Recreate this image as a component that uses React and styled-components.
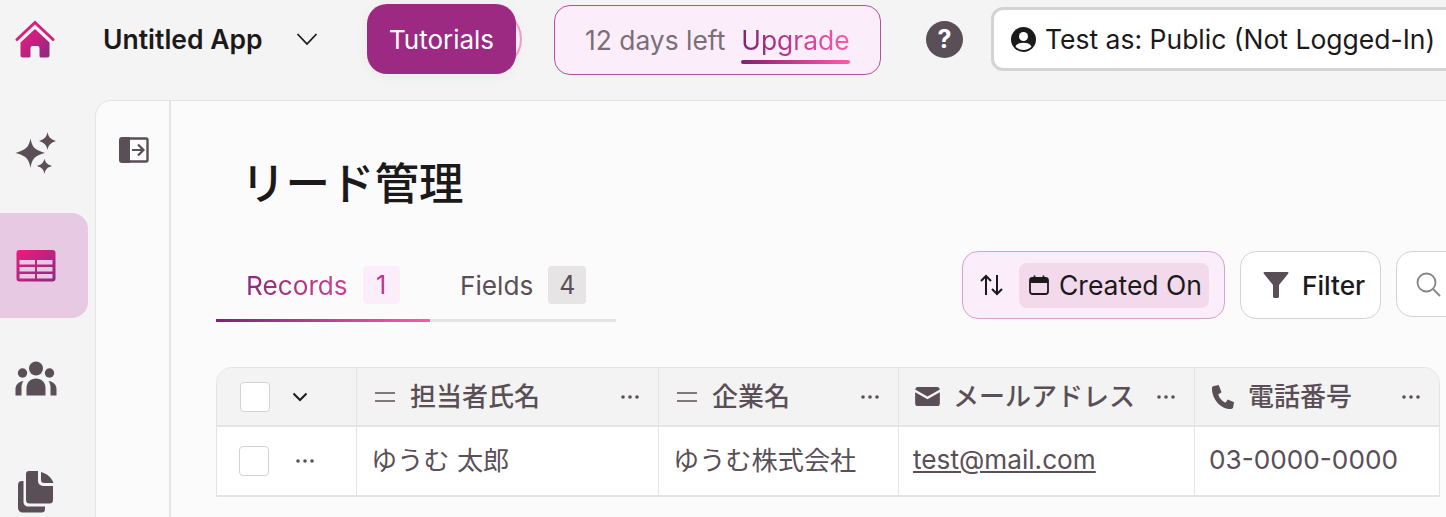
import React from "react";
import styled, { createGlobalStyle } from "styled-components";

const GlobalStyle = createGlobalStyle`
  html, body {
    margin: 0;
    padding: 0;
    height: 100%;
    overflow: hidden;
    background: #f4f4f4;
  }
  * {
    box-sizing: border-box;
  }
  body {
    font-family: Inter, "Noto Sans CJK JP", sans-serif;
    color: #1c191b;
  }
`;

const Page = styled.div`
  width: 1446px;
  height: 517px;
  overflow: hidden;
  display: flex;
  flex-direction: column;
`;

const TopBar = styled.header`
  height: 100px;
  flex-shrink: 0;
  display: flex;
  align-items: center;
  padding-left: 15px;
  padding-bottom: 22px;
  white-space: nowrap;
`;

const AppName = styled.span`
  font-size: 26.5px;
  font-weight: 600;
  margin-left: 48px;
  width: 193px;
  flex-shrink: 0;
`;

const Chevron = styled.svg`
  width: 22px;
  height: 14px;
  margin-right: 49px;
  flex-shrink: 0;
`;

const TutorialWrap = styled.div`
  position: relative;
  width: 149px;
  height: 70px;
  margin-right: 38px;
  flex-shrink: 0;
`;

const PulseRing = styled.span`
  position: absolute;
  right: -6px;
  top: 5px;
  width: 60px;
  height: 60px;
  border-radius: 50%;
  border: 2px solid #f89cc9;
`;

const TutorialButton = styled.button`
  position: relative;
  width: 100%;
  height: 100%;
  border: 0;
  border-radius: 20px;
  background: #9c2a83;
  color: #fff;
  font: 400 26px Inter, sans-serif;
  box-shadow: 0 2px 14px rgba(0, 0, 0, 0.05);
`;

const TrialBox = styled.div`
  width: 327px;
  height: 70px;
  flex-shrink: 0;
  display: flex;
  align-items: center;
  padding-left: 30px;
  gap: 16px;
  border: 1px solid #b4519f;
  border-radius: 16px;
  background: #fbeefa;
  font-size: 26.4px;
  color: #7b6e77;
  margin-right: 45px;
  margin-top: 2px;
`;

const Upgrade = styled.span`
  position: relative;
  background: linear-gradient(90deg, #7f2272, #ff5aab);
  -webkit-background-clip: text;
  background-clip: text;
  color: transparent;
`;

const UpgradeBar = styled.span`
  position: absolute;
  left: 0;
  right: 0;
  bottom: -8px;
  height: 4px;
  border-radius: 2px;
  background: linear-gradient(90deg, #7f2272, #ff5aab);
`;

const HelpIcon = styled.span`
  width: 37px;
  height: 37px;
  flex-shrink: 0;
  border-radius: 50%;
  background: #5a4f57;
  color: #fff;
  font-size: 25px;
  font-weight: 700;
  display: flex;
  align-items: center;
  justify-content: center;
  margin-right: 28px;
`;

const TestAs = styled.div`
  width: 480px;
  height: 64px;
  flex-shrink: 0;
  display: flex;
  align-items: center;
  gap: 9px;
  padding-left: 17px;
  border: 3px solid #d5d2d4;
  border-radius: 12px;
  background: #fff;
  font-size: 26.5px;
  font-weight: 400;
`;

const Body = styled.div`
  flex: 1;
  display: flex;
  min-height: 0;
`;

const Sidebar = styled.nav`
  width: 95px;
  flex-shrink: 0;
  display: flex;
  flex-direction: column;
  gap: 8px;
`;

const SideItem = styled.div`
  width: 88px;
  height: 105px;
  flex-shrink: 0;
  display: flex;
  align-items: center;
  justify-content: center;
  padding-right: 17px;
  border-radius: 0 16px 16px 0;
  background: ${({ $active }) => ($active ? "#e8c9e3" : "transparent")};
`;

const Panel = styled.main`
  flex: 1;
  min-width: 0;
  display: flex;
  background: #fbfbfb;
  border-top: 1px solid #e5e3e4;
  border-left: 1px solid #e5e3e4;
  border-top-left-radius: 16px;
`;

const Rail = styled.div`
  width: 75px;
  flex-shrink: 0;
  display: flex;
  justify-content: center;
  padding-top: 36px;
  padding-left: 3px;
  border-right: 2px solid #e5e3e4;
`;

const Content = styled.section`
  flex: 1;
  min-width: 0;
  padding-left: 45px;
`;

const Title = styled.h1`
  margin: 49px 0 0 25px;
  height: 68px;
  font-size: 44.5px;
  line-height: 68px;
  font-weight: 500;
  color: #1c191b;
`;

const ControlRow = styled.div`
  display: flex;
  align-items: flex-start;
  margin-top: 33px;
  height: 116px;
`;

const Tabs = styled.div`
  width: 400px;
  height: 71px;
  flex-shrink: 0;
  display: flex;
  border-bottom: 3px solid #e5e3e4;
  margin-right: 346px;
  position: relative;
`;

const Tab = styled.div`
  width: ${({ $w }) => $w}px;
  height: 71px;
  flex-shrink: 0;
  display: flex;
  align-items: center;
  gap: 15px;
  padding-left: 30px;
  font-size: 26.2px;
  color: #5a4f57;
  border-bottom: 3px solid transparent;
  ${({ $active }) =>
    $active && "border-image: linear-gradient(90deg, #7f2272, #ff5aab) 1;"}
`;

const TabLabel = styled.span`
  ${({ $active }) =>
    $active &&
    `background: linear-gradient(90deg, #8d2a7c, #d0408f);
     -webkit-background-clip: text;
     background-clip: text;
     color: transparent;`}
`;

const TabBadge = styled.span`
  width: ${({ $active }) => ($active ? 37 : 38)}px;
  height: 38px;
  border-radius: 4px;
  display: flex;
  align-items: center;
  justify-content: center;
  font-size: 25px;
  background: ${({ $active }) => ($active ? "#fbeefa" : "#e6e4e5")};
  color: ${({ $active }) => ($active ? "#b8378c" : "#5a4f57")};
`;

const SortBox = styled.div`
  width: 263px;
  height: 68px;
  flex-shrink: 0;
  display: flex;
  align-items: center;
  padding-left: 17px;
  gap: 16px;
  border: 1px solid #d8a2d0;
  border-radius: 16px;
  background: #fbeefa;
  margin-right: 15px;
`;

const SortChip = styled.div`
  width: 190px;
  height: 45px;
  display: flex;
  align-items: center;
  gap: 10px;
  padding-left: 10px;
  border-radius: 8px;
  background: #f2daec;
  font-size: 26.5px;
  white-space: nowrap;
`;

const FilterButton = styled.div`
  width: 141px;
  height: 68px;
  flex-shrink: 0;
  display: flex;
  align-items: center;
  gap: 13px;
  padding-left: 22px;
  border: 1px solid #d5d2d4;
  border-radius: 16px;
  background: #fff;
  font-size: 26.2px;
  font-weight: 500;
  margin-right: 15px;
`;

const SearchBox = styled.div`
  width: 200px;
  height: 66px;
  flex-shrink: 0;
  display: flex;
  align-items: center;
  padding-left: 19px;
  border: 1px solid #d5d2d4;
  border-radius: 16px;
  background: #fff;
`;

const Table = styled.div`
  width: 1224px;
  border: 1px solid #e5e3e4;
  border-radius: 16px 16px 0 0;
  overflow: hidden;
`;

const Row = styled.div`
  display: grid;
  grid-template-columns: 140px 302px 240px 296px 1fr;
  height: ${({ $head }) => ($head ? 59 : 69)}px;
  background: ${({ $head }) => ($head ? "#f3f3f3" : "#fff")};
  border-bottom: ${({ $head }) => ($head ? "2px" : "1px")} solid #e5e3e4;
`;

const HeadCell = styled.div`
  display: flex;
  align-items: center;
  padding: 0 18px 0 16px;
  gap: 13px;
  border-right: 1px solid #e5e3e4;
  font-size: 26px;
  font-weight: 500;
  color: #5a4f57;
  white-space: nowrap;
  &:last-child {
    border-right: 0;
  }
`;

const HeadLabel = styled.span`
  flex: 1;
  min-width: 0;
  margin-bottom: 4px;
`;

const SelectCell = styled.div`
  display: flex;
  align-items: center;
  padding-left: ${({ $body }) => ($body ? 22 : 23)}px;
  gap: ${({ $body }) => ($body ? 26 : 22)}px;
  border-right: 1px solid #e5e3e4;
`;

const Check = styled.span`
  width: 30px;
  height: 30px;
  flex-shrink: 0;
  border: 1px solid #d5d2d4;
  border-radius: 4px;
  background: #fff;
`;

const BodyCell = styled.div`
  display: flex;
  align-items: center;
  padding: 0 14px;
  padding-bottom: 4px;
  border-right: 1px solid #e5e3e4;
  font-size: 26.2px;
  color: #5a4f57;
  white-space: nowrap;
  &:last-child {
    border-right: 0;
  }
`;

const Mail = styled.a`
  color: #5a4f57;
  text-decoration: underline;
`;

const Dots = ({ color = "#5a4f57" }) => (
  <svg width="20" height="6" viewBox="0 0 20 6" style={{ flexShrink: 0 }}>
    <circle cx="3" cy="3" r="1.8" fill={color} />
    <circle cx="10" cy="3" r="1.8" fill={color} />
    <circle cx="17" cy="3" r="1.8" fill={color} />
  </svg>
);

const EqualIcon = () => (
  <svg width="24" height="14" viewBox="0 0 24 14" style={{ flexShrink: 0 }}>
    <path d="M2 3h20M2 11h20" stroke="#5a4f57" strokeWidth="1.6" />
  </svg>
);

const Gradient = ({ id }) => (
  <defs>
    <linearGradient id={id} x1="0" y1="0" x2="1" y2="1">
      <stop offset="0" stopColor="#f01a7f" />
      <stop offset="1" stopColor="#8a2a82" />
    </linearGradient>
  </defs>
);

const HomeIcon = () => (
  <svg width="40" height="38" viewBox="0 0 40 38" style={{ flexShrink: 0 }}>
    <Gradient id="homeGrad" />
    <path d="M2 19.500 20 2.500l18 17" fill="none" stroke="#d8207f" strokeWidth="3" strokeLinecap="round" />
    <path
      d="M20 9 5.500 22.500V35a2.500 2.500 0 0 0 2.500 2.500H14a1.500 1.500 0 0 0 1.500-1.500V28a2 2 0 0 1 2-2h5a2 2 0 0 1 2 2v8a1.500 1.500 0 0 0 1.500 1.500h6a2.500 2.500 0 0 0 2.500-2.500V22.500Z"
      fill="url(#homeGrad)"
    />
  </svg>
);

const SparkIcon = () => (
  <svg width="42" height="42" viewBox="0 0 42 42">
    <path d="M15.500 6.500c1.500 8.200 4 11.500 14.500 14.500-10.500 2.500-13 6-14.500 15C14 27 11 23.500.5 21 11 18 14 14.700 15.500 6.500Z" fill="#5a4f57" />
    <path d="M32.500 0c1 5 2.800 7 8.500 9-5.700 2-7.500 4-8.500 9-1-5-2.800-7-8.500-9 5.700-2 7.500-4 8.500-9Z" fill="#5a4f57" />
    <path d="M29.500 26.500c.9 4 2.400 5.800 7.500 7.500-5.100 1.700-6.600 3.500-7.500 8-.9-4.500-2.400-6.300-7.500-8 5.100-1.700 6.600-3.500 7.500-7.500Z" fill="#5a4f57" />
  </svg>
);

const TableIcon = () => (
  <svg width="40" height="32" viewBox="0 0 40 32">
    <Gradient id="tableGrad" />
    <rect x="0.500" y="0" width="39" height="31.500" rx="3" fill="url(#tableGrad)" />
    {[10, 17, 24].map((y) => (
      <g key={y} fill="#e8c9e3">
        <rect x="3.500" y={y} width="15.500" height="4.500" />
        <rect x="21" y={y} width="15.500" height="4.500" />
      </g>
    ))}
  </svg>
);

const GroupIcon = () => (
  <svg width="42" height="36" viewBox="0 0 42 36" fill="#5a4f57">
    <circle cx="21" cy="7.500" r="7" />
    <circle cx="7.500" cy="12" r="4.700" />
    <circle cx="34.500" cy="12" r="4.700" />
    <path d="M11.500 34.500V27c0-5.500 4-9.500 9.500-9.500s9.500 4 9.500 9.500v7.500Z" />
    <path d="M0.500 34.500V28c0-4 3-7.500 8-8-1.500 2-2 4-2 7v7.500Z" />
    <path d="M41.500 34.500V28c0-4-3-7.500-8-8 1.500 2 2 4 2 7v7.500Z" />
  </svg>
);

const FilesIcon = () => (
  <svg width="36" height="42" viewBox="0 0 36 42" fill="#5a4f57">
    <path d="M11 0h9v10a5 5 0 0 0 5 5h10v14a3.500 3.500 0 0 1-3.500 3.500H11.500A3.500 3.500 0 0 1 8 29V3a3 3 0 0 1 3-3Z" />
    <path d="M23 1c6 1.500 11 6 12.500 11H26a3 3 0 0 1-3-3Z" />
    <path d="M5.500 10v21a4.500 4.500 0 0 0 4.500 4.500h17V38a3.500 3.500 0 0 1-3.500 3.500H4.500A4.500 4.500 0 0 1 0 37V14a4 4 0 0 1 4-4Z" />
  </svg>
);

const CollapseIcon = () => (
  <svg width="30" height="26" viewBox="0 0 30 26">
    <path d="M3 0h8v26H3a3 3 0 0 1-3-3V3a3 3 0 0 1 3-3Z" fill="#5a4f57" />
    <path d="M11 1.500h16A1.500 1.500 0 0 1 28.500 3v20a1.500 1.500 0 0 1-1.500 1.500H11" fill="none" stroke="#5a4f57" strokeWidth="2.400" />
    <path d="M13 13h11M19 7.500l5.500 5.500-5.500 5.500" fill="none" stroke="#5a4f57" strokeWidth="2.200" />
  </svg>
);

const UserCircle = () => (
  <svg width="25" height="25" viewBox="0 0 25 25" style={{ flexShrink: 0 }}>
    <circle cx="12.500" cy="12.500" r="12.500" fill="#1c191b" />
    <circle cx="12.500" cy="9.500" r="4.500" fill="#fff" />
    <path d="M4.500 19.500c1.500-3 4.500-3.800 8-3.800s6.500.8 8 3.800c-2 2.300-4.800 3.500-8 3.500s-6-1.200-8-3.500Z" fill="#fff" />
  </svg>
);

const SortIcon = () => (
  <svg width="23" height="22" viewBox="0 0 23 22" style={{ flexShrink: 0 }}>
    <path d="M6 21V2M1 7l5-5 5 5M17 1v19M12 15l5 5 5-5" fill="none" stroke="#1c191b" strokeWidth="2" />
  </svg>
);

const CalendarIcon = () => (
  <svg width="20" height="20" viewBox="0 0 20 20" style={{ flexShrink: 0 }}>
    <rect x="1" y="3" width="18" height="16" rx="2.500" fill="none" stroke="#1c191b" strokeWidth="1.800" />
    <path d="M1 4h18v4H1Z" fill="#1c191b" />
    <path d="M5.500 0.500v3M14.500 0.500v3" stroke="#1c191b" strokeWidth="1.800" />
  </svg>
);

const FunnelIcon = () => (
  <svg width="26" height="26" viewBox="0 0 26 26" style={{ flexShrink: 0 }}>
    <path d="M1.500 0h23a1 1 0 0 1 .8 1.600L16 13v11.500a1.500 1.500 0 0 1-1.500 1.500h-3a1.500 1.500 0 0 1-1.500-1.500V13L.7 1.600A1 1 0 0 1 1.500 0Z" fill="#5a4f57" />
  </svg>
);

const SearchIcon = () => (
  <svg width="25" height="25" viewBox="0 0 25 25">
    <circle cx="10.500" cy="10.500" r="9" fill="none" stroke="#8a8087" strokeWidth="1.800" />
    <path d="m17 17 7 7" stroke="#8a8087" strokeWidth="1.800" />
  </svg>
);

const MailIcon = () => (
  <svg width="25" height="19" viewBox="0 0 26 20" style={{ flexShrink: 0 }}>
    <path d="M3 0h20a3 3 0 0 1 3 2.500L13 10 0 2.500A3 3 0 0 1 3 0Z" fill="#5a4f57" />
    <path d="M0 5.500 13 13l13-7.500V17a3 3 0 0 1-3 3H3a3 3 0 0 1-3-3Z" fill="#5a4f57" />
  </svg>
);

const PhoneIcon = () => (
  <svg width="24" height="26" viewBox="0 0 25 26" style={{ flexShrink: 0 }}>
    <path d="M3 1.500 8 .5 11 8 7.500 10.500C8.500 14 11.500 17.500 15 19l2.500-3.500 6.500 3-1 5.500c-.3 1-1.200 1.500-2 1.500C10 25.500 1 15.500 1 3.500c0-1 .8-1.800 2-2Z" fill="#5a4f57" />
  </svg>
);

const columns = [
  { label: "担当者氏名", icon: <EqualIcon /> },
  { label: "企業名", icon: <EqualIcon /> },
  { label: "メールアドレス", icon: <MailIcon /> },
  { label: "電話番号", icon: <PhoneIcon /> },
];

const App = () => {
  return (
    <Page>
      <GlobalStyle />
      <TopBar>
        <HomeIcon />
        <AppName>Untitled App</AppName>
        <Chevron viewBox="0 0 22 14">
          <path d="m1.500 2 9.500 10 9.500-10" fill="none" stroke="#1c191b" strokeWidth="1.800" />
        </Chevron>
        <TutorialWrap>
          <PulseRing />
          <TutorialButton>Tutorials</TutorialButton>
        </TutorialWrap>
        <TrialBox>
          <span>12 days left</span>
          <Upgrade>
            Upgrade
            <UpgradeBar />
          </Upgrade>
        </TrialBox>
        <HelpIcon>?</HelpIcon>
        <TestAs>
          <UserCircle />
          <span>Test as: Public (Not Logged-In)</span>
        </TestAs>
      </TopBar>
      <Body>
        <Sidebar>
          <SideItem>
            <SparkIcon />
          </SideItem>
          <SideItem $active>
            <TableIcon />
          </SideItem>
          <SideItem>
            <GroupIcon />
          </SideItem>
          <SideItem>
            <FilesIcon />
          </SideItem>
        </Sidebar>
        <Panel>
          <Rail>
            <CollapseIcon />
          </Rail>
          <Content>
            <Title>リード管理</Title>
            <ControlRow>
              <Tabs>
                <Tab $active $w={214}>
                  <TabLabel $active>Records</TabLabel>
                  <TabBadge $active>1</TabBadge>
                </Tab>
                <Tab $w={186}>
                  <TabLabel>Fields</TabLabel>
                  <TabBadge>4</TabBadge>
                </Tab>
              </Tabs>
              <SortBox>
                <SortIcon />
                <SortChip>
                  <CalendarIcon />
                  <span>Created On</span>
                </SortChip>
              </SortBox>
              <FilterButton>
                <FunnelIcon />
                <span>Filter</span>
              </FilterButton>
              <SearchBox>
                <SearchIcon />
              </SearchBox>
            </ControlRow>
            <Table>
              <Row $head>
                <SelectCell>
                  <Check />
                  <svg width="16" height="10" viewBox="0 0 16 10">
                    <path d="m1.500 1.500 6.500 6.500 6.500-6.500" fill="none" stroke="#1c191b" strokeWidth="2" />
                  </svg>
                </SelectCell>
                {columns.map((col) => (
                  <HeadCell key={col.label}>
                    {col.icon}
                    <HeadLabel>{col.label}</HeadLabel>
                    <Dots />
                  </HeadCell>
                ))}
              </Row>
              <Row>
                <SelectCell $body>
                  <Check />
                  <Dots />
                </SelectCell>
                <BodyCell>ゆうむ 太郎</BodyCell>
                <BodyCell>ゆうむ株式会社</BodyCell>
                <BodyCell>
                  <Mail>test@mail.com</Mail>
                </BodyCell>
                <BodyCell>03-0000-0000</BodyCell>
              </Row>
            </Table>
          </Content>
        </Panel>
      </Body>
    </Page>
  );
};

export default App;
